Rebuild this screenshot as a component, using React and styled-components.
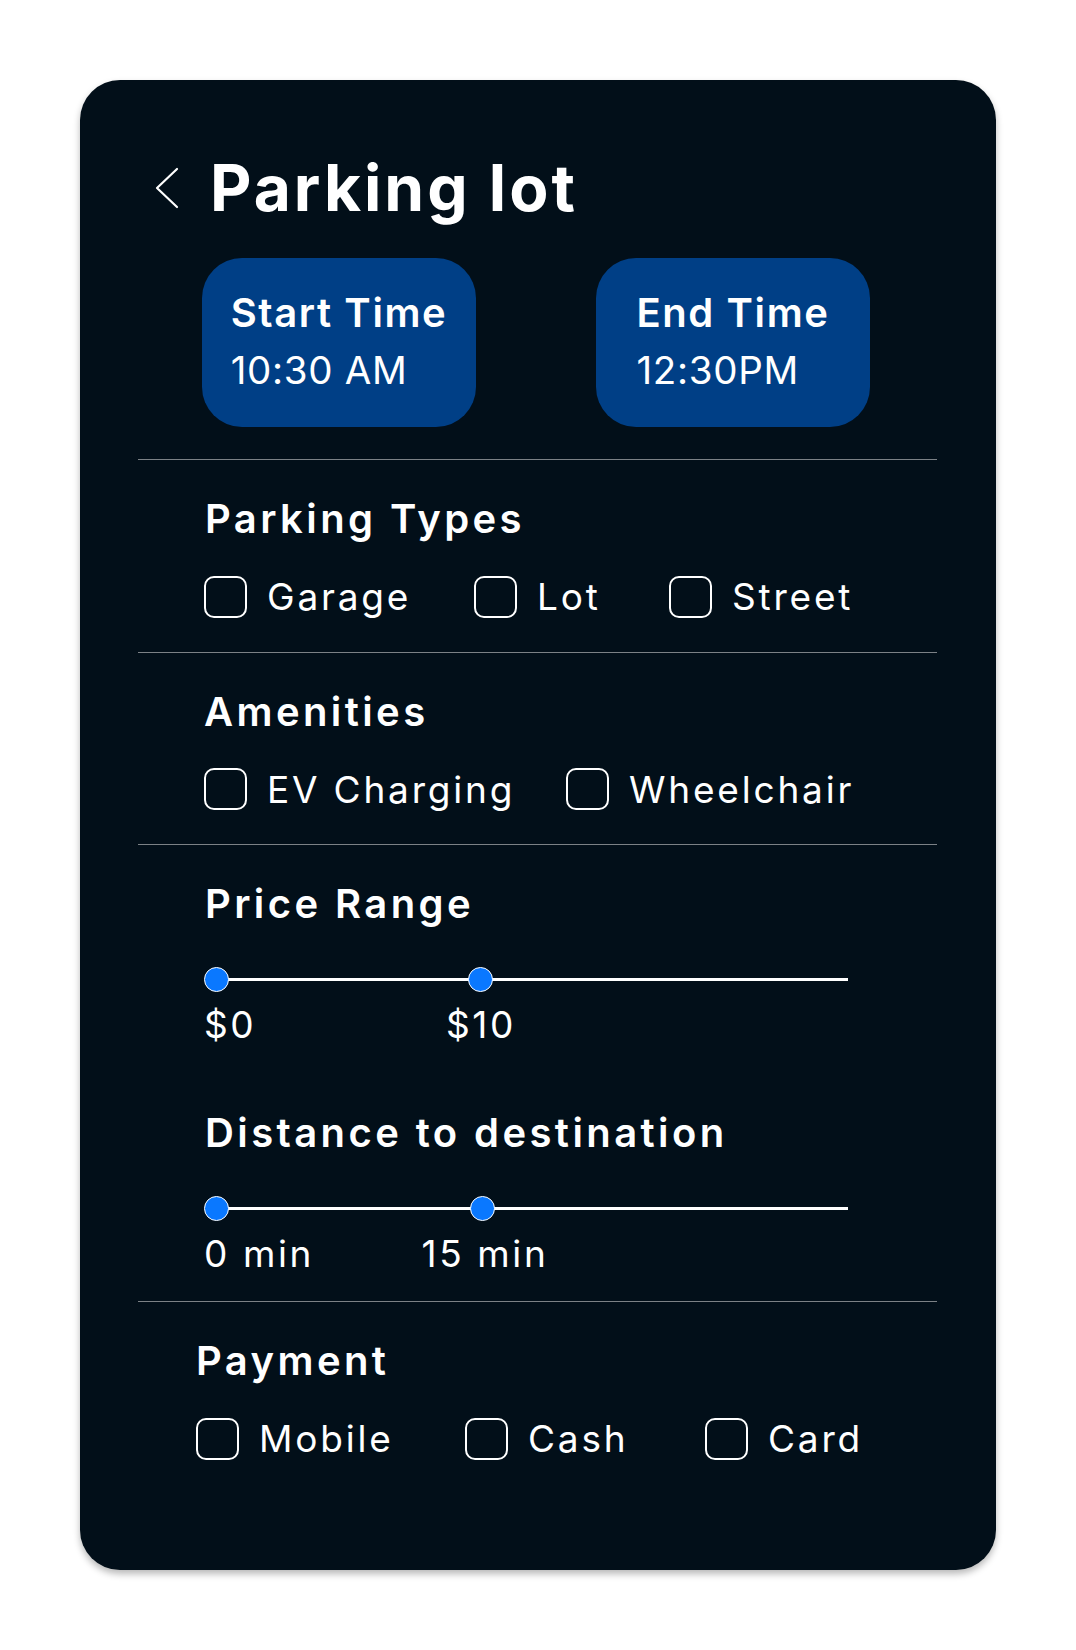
import React from "react";
import styled, { createGlobalStyle } from "styled-components";

const Global = createGlobalStyle`
  html, body { margin: 0; padding: 0; background: #ffffff; }
  body { font-family: "Inter", "Open Sans", sans-serif; color: #ffffff; }
  * { box-sizing: border-box; }
`;

const Page = styled.div`
  padding: 80px 80px 81px 80px;
`;

const Card = styled.div`
  width: 916px;
  background: #020f19;
  border-radius: 40px;
  box-shadow: 0 4px 7px rgba(0, 0, 0, 0.28);
  padding: 76px 0 76px 0;
  display: flex;
  flex-direction: column;
`;

const Header = styled.div`
  display: flex;
  align-items: center;
  padding-left: 75px;
  height: 63px;
`;

const Back = styled.button`
  background: none;
  border: 0;
  padding: 0;
  margin: 0 31px 0 0;
  width: 24px;
  height: 42px;
  display: flex;
  align-items: center;
  cursor: pointer;
`;

const Title = styled.h1`
  margin: 0;
  font-size: 64px;
  line-height: 1;
  font-weight: 700;
  letter-spacing: 3px;
`;

const TimeRow = styled.div`
  display: flex;
  gap: 120px;
  margin: 39px 0 32px 122px;
`;

const TimeButton = styled.button`
  width: 274px;
  height: 169px;
  border: 0;
  border-radius: 40px;
  background: #003f86;
  color: #ffffff;
  font-family: inherit;
  display: flex;
  justify-content: center;
  align-items: flex-start;
  padding-top: 35px;
  cursor: pointer;
`;

const TimeInner = styled.div`
  display: flex;
  flex-direction: column;
  align-items: flex-start;
  text-align: left;
`;

const TimeLabel = styled.span`
  font-size: 40px;
  line-height: 1;
  font-weight: 600;
  letter-spacing: 1.6px;
`;

const TimeValue = styled.span`
  font-size: 38.5px;
  line-height: 1;
  font-weight: 400;
  letter-spacing: 0.7px;
  margin-top: 18px;
`;

const Divider = styled.hr`
  margin: 0 59px 0 58px;
  border: 0;
  height: 1px;
  background: #7c8186;
`;

const Section = styled.section`
  display: flex;
  flex-direction: column;
  padding: 39px 0 ${(p) => p.$bottom ?? 34}px ${(p) => p.$indent ?? 124}px;
`;

const SectionTitle = styled.h2`
  margin: ${(p) => p.$top ?? 0}px 0 0 0;
  font-size: 40px;
  line-height: 1;
  font-weight: 600;
  letter-spacing: 3.4px;
  padding-left: ${(p) => p.$shift ?? 0}px;
`;

const Options = styled.div`
  display: flex;
  align-items: center;
  margin-top: 36.5px;
`;

const Option = styled.label`
  display: flex;
  align-items: center;
  width: ${(p) => (p.$w ? `${p.$w}px` : "auto")};
  cursor: pointer;
`;

const Box = styled.span`
  width: 43px;
  height: 42px;
  border: 2.5px solid #ffffff;
  border-radius: 10px;
  flex-shrink: 0;
`;

const OptionText = styled.span`
  margin-left: 20px;
  font-size: 37px;
  line-height: 1;
  font-weight: 400;
  letter-spacing: 2.8px;
  white-space: nowrap;
`;

const SliderBlock = styled.div`
  display: flex;
  flex-direction: column;
  margin-top: ${(p) => p.$top}px;
`;

const Slider = styled.div`
  position: relative;
  width: 644px;
  height: 25px;
  &::before {
    content: "";
    position: absolute;
    left: 12px;
    right: 0;
    top: 11px;
    height: 3px;
    background: #ffffff;
  }
`;

const Knob = styled.span`
  position: absolute;
  top: 0;
  width: 25px;
  height: 25px;
  border-radius: 50%;
  background: #0a78ff;
  border: 1.5px solid #ffffff;
  margin-left: -12.5px;
`;

const Ticks = styled.div`
  display: grid;
  margin-top: 14px;
  width: 644px;
`;

const Tick = styled.div`
  grid-area: 1 / 1;
  width: 0;
  display: flex;
  justify-content: ${(p) => (p.$start ? "flex-start" : "center")};
  font-size: 37px;
  line-height: 1;
  font-weight: 400;
  letter-spacing: 2.6px;
  white-space: nowrap;
`;

function Chevron() {
  return (
    <svg width="24" height="42" viewBox="0 0 24 42" fill="none">
      <path d="M22 2 L2 21 L22 40" stroke="#ffffff" strokeWidth="2.2" strokeLinecap="round" strokeLinejoin="round" />
    </svg>
  );
}

function CheckOption({ label, w }) {
  return (
    <Option $w={w}>
      <Box />
      <OptionText>{label}</OptionText>
    </Option>
  );
}

function RangeSlider({ top, low, high, lowLabel, highLabel, highTick }) {
  const span = 631;
  const lowX = 12.5 + low * span;
  const highX = 12.5 + high * span;
  return (
    <SliderBlock $top={top}>
      <Slider>
        <Knob style={{ left: `${lowX}px` }} />
        <Knob style={{ left: `${highX}px` }} />
      </Slider>
      <Ticks>
        <Tick $start>{lowLabel}</Tick>
        <Tick style={{ marginLeft: `${highTick}px` }}>{highLabel}</Tick>
      </Ticks>
    </SliderBlock>
  );
}

export default function App() {
  return (
    <>
      <Global />
      <Page>
        <Card>
          <Header>
            <Back aria-label="Back">
              <Chevron />
            </Back>
            <Title>Parking lot</Title>
          </Header>

          <TimeRow>
            <TimeButton>
              <TimeInner>
                <TimeLabel>Start Time</TimeLabel>
                <TimeValue>10:30 AM</TimeValue>
              </TimeInner>
            </TimeButton>
            <TimeButton>
              <TimeInner>
                <TimeLabel>End Time</TimeLabel>
                <TimeValue>12:30PM</TimeValue>
              </TimeInner>
            </TimeButton>
          </TimeRow>

          <Divider />
          <Section>
            <SectionTitle $shift={1}>Parking Types</SectionTitle>
            <Options>
              <CheckOption label="Garage" w={270} />
              <CheckOption label="Lot" w={195} />
              <CheckOption label="Street" />
            </Options>
          </Section>

          <Divider />
          <Section>
            <SectionTitle>Amenities</SectionTitle>
            <Options>
              <CheckOption label="EV Charging" w={362} />
              <CheckOption label="Wheelchair" />
            </Options>
          </Section>

          <Divider />
          <Section $bottom={29} $indent={124}>
            <SectionTitle $shift={1}>Price Range</SectionTitle>
            <RangeSlider top={42.5} low={0} high={0.418} lowLabel="$0" highLabel="$10" highTick={277} />
            <SectionTitle $shift={1} $top={70}>
              Distance to destination
            </SectionTitle>
            <RangeSlider top={43.5} low={0} high={0.421} lowLabel="0 min" highLabel="15 min" highTick={281} />
          </Section>

          <Divider />
          <Section $indent={116}>
            <SectionTitle>Payment</SectionTitle>
            <Options>
              <CheckOption label="Mobile" w={269} />
              <CheckOption label="Cash" w={240} />
              <CheckOption label="Card" />
            </Options>
          </Section>
        </Card>
      </Page>
    </>
  );
}
